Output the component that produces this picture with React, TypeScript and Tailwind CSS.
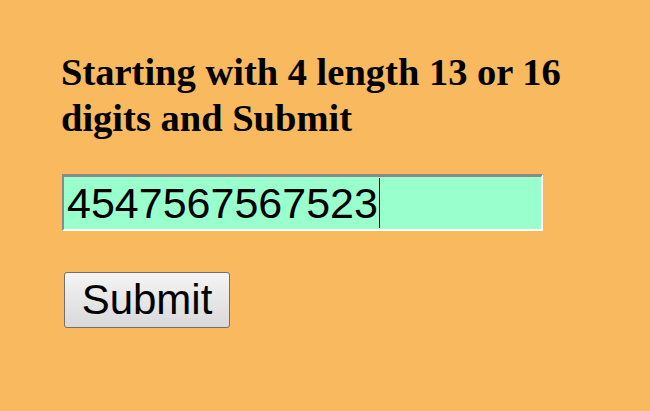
export default function App() {
  return (
    <div className="min-h-[411px] w-full bg-[#f8b95f] pl-[61px] pt-[49px]">
      <h1 className="text-[38.5px] leading-[46px] font-bold text-black font-['Liberation_Serif',serif] w-[520px]">
        Starting with 4 length 13 or 16 digits and Submit
      </h1>

      {/* text field, drawn with its caret after the last digit */}
      <div className="mt-[33px] ml-[1px] flex h-[57px] w-[481px] items-center border-2 border-t-[3px] border-t-[#8a8a8a] border-l-[#8a8a8a] border-r-white border-b-white bg-[#99ffcc] pl-[3px] font-['Liberation_Sans',sans-serif] text-[43px] leading-none text-black">
        <span>4547567567523</span>
        <span className="ml-[1px] h-[50px] w-px bg-black" />
      </div>

      <button
        type="button"
        className="mt-[41px] ml-[3px] flex h-[56px] w-[166px] items-center justify-center rounded-[3px] border border-[#707070] bg-gradient-to-b from-[#f4f4f4] to-[#d9d9d9] font-['Liberation_Sans',sans-serif] text-[42px] leading-none text-black"
      >
        Submit
      </button>
    </div>
  )
}
